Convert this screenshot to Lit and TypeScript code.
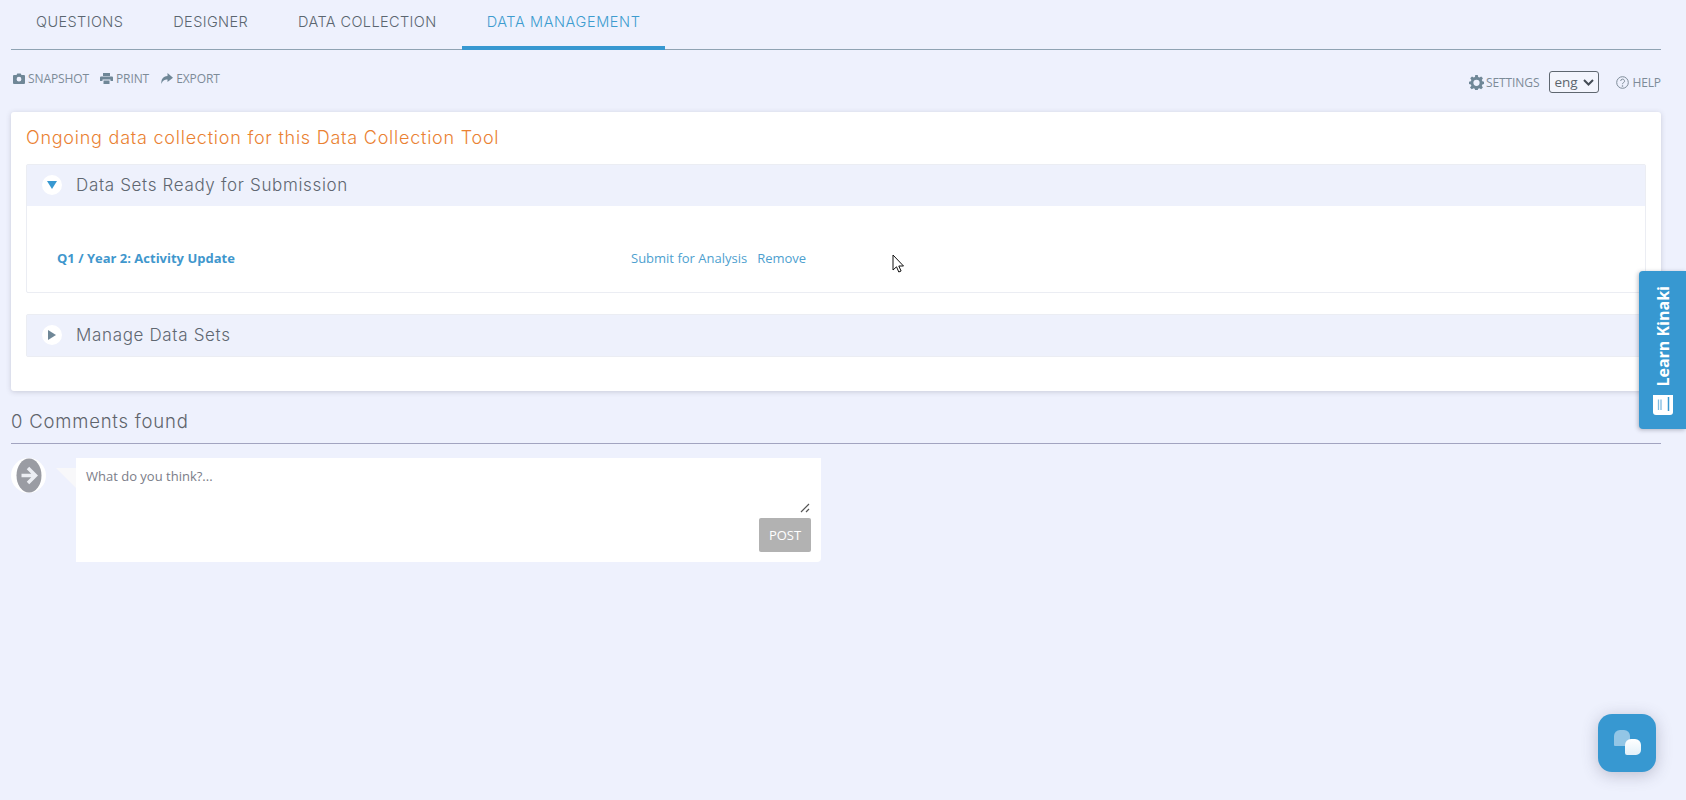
import { LitElement, html, css } from "lit";
import { customElement } from "lit/decorators.js";

@customElement("app-root")
export class AppRoot extends LitElement {
  static styles = css`
    :host { display: block; height: 800px; background: #eef1fd; position: relative; overflow: hidden; font-family: "Open Sans", sans-serif; color: #6f7f8e; }
    .page { padding: 0 25px 0 11px; display: flex; flex-direction: column; }
    .tabs { display: flex; height: 49px; border-bottom: 1px solid #8fa3b3; }
    .tab { box-sizing: border-box; padding: 0 25px 3px; height: 50px; display: flex; align-items: center; font: 300 14.5px Inter, sans-serif; color: #5b6670; letter-spacing: .4px; border-bottom: 4px solid transparent; }
    .tab.active { color: #3d9ccf; border-bottom-color: #3798d1; letter-spacing: .6px; }
    .toolbar { display: flex; align-items: flex-start; height: 24px; margin-top: 17px; font-size: 12px; letter-spacing: -0.1px; color: #7d8b98; }
    .group { display: flex; align-items: center; height: 22px; }
    .group.left { padding-left: 2px; }
    .group.right { margin-top: 4px; }
    .tool { display: flex; align-items: center; gap: 3px; margin-right: 11px; }
    .tool.end { margin-right: 0; }
    .tool.tight { gap: 2px; }
    .tool svg { display: block; fill: #6f8797; }
    .spacer { flex: 1; }
    .select { width: 50px; height: 22px; box-sizing: border-box; border: 1px solid #5f6770; border-radius: 3px; background: #f3f5fd; display: flex; align-items: center; justify-content: space-between; padding: 0 4px; font-size: 13.5px; letter-spacing: 0; color: #5c656d; margin: 0 17px 0 10px; }
    .card { margin-top: 21px; background: #fff; height: 279px; box-sizing: border-box; padding: 14px 15px 0; border-radius: 3px; box-shadow: 0 1px 5px rgba(90,90,110,.25); }
    .title { font: 300 18px/24px Inter, sans-serif; letter-spacing: .76px; color: #ea8132; }
    .section { margin-top: 14px; border: 1px solid #ebedf3; border-radius: 2px; }
    .section + .section { margin-top: 21px; }
    .head { box-sizing: border-box; height: 41px; background: #eef1fc; display: flex; align-items: center; padding: 0 0 2px 15px; font: 300 17px Inter, sans-serif; letter-spacing: .66px; color: #5f6771; gap: 14px; }
    .disc { width: 20px; height: 20px; border-radius: 50%; background: #fff; display: flex; align-items: center; justify-content: center; }
    .body { height: 86px; box-sizing: border-box; display: flex; align-items: center; padding: 17px 0 0 30px; font-size: 13px; color: #4e9fcf; }
    .name { width: 574px; font-weight: 700; color: #3f97cd; }
    .link { margin-right: 10px; }
    .comments { margin-top: 18px; height: 34px; font: 300 18.5px/24px Inter, sans-serif; letter-spacing: .8px; color: #5f646c; border-bottom: 1px solid #a2a4c0; }
    .row { display: flex; margin-top: 14px; }
    .avatar { width: 35px; height: 35px; flex: none; border-radius: 50%; background: #fff; display: flex; align-items: center; justify-content: center; }
    .bubble { position: relative; width: 745px; height: 104px; margin-left: 30px; background: #fff; border-radius: 0 0 4px 0; }
    .bubble::before { content: ""; position: absolute; left: -20px; top: 10px; border-top: 20px solid #f8f8fa; border-left: 20px solid transparent; }
    .textarea { padding: 9px 0 0 10px; font-size: 13px; color: #7b7d88; }
    .post { position: absolute; right: 10px; bottom: 10px; width: 52px; height: 34px; border-radius: 2px; background: #b2b2b2; color: #fff; font-size: 13px; display: flex; align-items: center; justify-content: center; }
    .grip { position: absolute; right: 11px; bottom: 49px; }
    .learn { position: absolute; right: 0; top: 271px; width: 47px; height: 158px; box-sizing: border-box; background: #3798d1; border-radius: 4px 0 0 4px; box-shadow: -1px 1px 4px rgba(60,60,80,.35); color: #fff; display: flex; flex-direction: column-reverse; align-items: center; gap: 8px; padding-bottom: 14px; }
    .learn span { writing-mode: vertical-rl; transform: rotate(180deg); font: 700 16px "Open Sans", sans-serif; }
    .chat { position: absolute; left: 1598px; top: 714px; width: 58px; height: 58px; border-radius: 14px; background: #3798d1; box-shadow: 0 3px 16px rgba(70,70,100,.3); }
    .cursor { position: absolute; left: 892px; top: 254px; }
  `;

  render() {
    return html`
      <div class="page">
        <nav class="tabs">
          <div class="tab">QUESTIONS</div>
          <div class="tab">DESIGNER</div>
          <div class="tab">DATA COLLECTION</div>
          <div class="tab active">DATA MANAGEMENT</div>
        </nav>
        <div class="toolbar">
          <div class="group left">
            <div class="tool">
              <svg width="12" height="11" viewBox="0 0 12 11"><path fill-rule="evenodd" d="M1 2h2.500L4.300 .5h3.400L8.500 2H11a1 1 0 0 1 1 1v7a1 1 0 0 1-1 1H1a1 1 0 0 1-1-1V3a1 1 0 0 1 1-1zM6 3.800a2.400 2.400 0 1 0 0 4.800 2.400 2.400 0 0 0 0-4.800z"/></svg>
              SNAPSHOT
            </div>
            <div class="tool">
              <svg width="13" height="11" viewBox="0 0 13 11"><path fill-rule="evenodd" d="M3 0h7v3H3zM1 3.500h11a1 1 0 0 1 1 1V8h-2.500V6.500h-8V8H0V4.500a1 1 0 0 1 1-1zM3.500 7.500h6V11h-6z"/></svg>
              PRINT
            </div>
            <div class="tool">
              <svg width="13" height="11" viewBox="0 0 13 11"><path d="M7.500 0 13 4.800 7.500 9V6.500C4.500 6.500 2.500 7.500 1.500 11 .8 6.500 3 3.200 7.500 3z"/></svg>
              EXPORT
            </div>
          </div>
          <div class="spacer"></div>
          <div class="group right">
            <div class="tool end tight">
              <svg width="15" height="15" viewBox="0 0 24 24"><path fill-rule="evenodd" d="M10 0h4l.7 3.200 2 .8L19.500 2.300l2.800 2.800L20.500 8l.8 2 3 .7v3.700l-3 .7-.8 2 1.700 2.800-2.800 2.800-2.800-1.700-2 .8-.7 3h-4l-.7-3-2-.8-2.800 1.700-2.800-2.800L3.800 17l-.8-2-3-.7v-3.700l3-.7.8-2L2 5.100l2.800-2.800L7.500 4l2-.8zM12 7.500a5 5 0 1 0 0 10 5 5 0 0 0 0-10z"/></svg>
              SETTINGS
            </div>
            <div class="select">eng
              <svg width="11" height="7" viewBox="0 0 11 7"><path d="M1 1l4.500 4.500L10 1" fill="none" stroke="#444c55" stroke-width="2"/></svg>
            </div>
            <div class="tool end">
              <svg width="13" height="13" viewBox="0 0 13 13"><circle cx="6.500" cy="6.500" r="5.800" fill="none" stroke="#7d8b98"/><path d="M4.700 5a1.900 1.900 0 1 1 2.800 1.700c-.7.400-1 .7-1 1.500" fill="none" stroke="#7d8b98"/><circle cx="6.500" cy="10" r=".8" fill="#7d8b98"/></svg>
              HELP
            </div>
          </div>
        </div>
        <section class="card">
          <div class="title">Ongoing data collection for this Data Collection Tool</div>
          <div class="section">
            <div class="head">
              <span class="disc"><svg width="10" height="8" viewBox="0 0 10 8"><path d="M0 0h10L5 8z" fill="#3798d1"/></svg></span>
              Data Sets Ready for Submission
            </div>
            <div class="body">
              <span class="name">Q1 / Year 2: Activity Update</span>
              <span class="link">Submit for Analysis</span>
              <span class="link">Remove</span>
            </div>
          </div>
          <div class="section">
            <div class="head">
              <span class="disc"><svg width="8" height="10" viewBox="0 0 8 10"><path d="M0 0v10l8-5z" fill="#6f8797"/></svg></span>
              Manage Data Sets
            </div>
          </div>
        </section>
        <div class="comments">0 Comments found</div>
        <div class="row">
          <div class="avatar">
            <svg width="26" height="35" viewBox="0 0 26 35"><ellipse cx="13" cy="17.500" rx="12.500" ry="17" fill="#9a9ca3"/><path d="M5.500 17.500h13M12 10l7.500 7.500L12 25" fill="none" stroke="#eceef3" stroke-width="3.500"/></svg>
          </div>
          <div class="bubble">
            <div class="textarea">What do you think?...</div>
            <svg class="grip" width="10" height="10" viewBox="0 0 10 10"><path d="M1 9 9 1M6 9l3-3" stroke="#555" stroke-width="1.200"/></svg>
            <div class="post">POST</div>
          </div>
        </div>
      </div>
      <aside class="learn">
        <svg width="20" height="20" viewBox="0 0 20 20"><path d="M0 0h20v17a3 3 0 0 1-3 3H3a3 3 0 0 1-3-3z" fill="#fff"/><path d="M5.500 4.500v10.500M8 4.500v10.500" stroke="#7fbbe0" stroke-width="1.300"/><path d="M15.500 2v14" stroke="#3798d1" stroke-width="1.500"/></svg>
        <span>Learn Kinaki</span>
      </aside>
      <div class="chat">
        <svg width="58" height="58" viewBox="0 0 58 58">
          <defs><linearGradient id="fb" x1="0" y1="0" x2="0" y2="1"><stop offset="0" stop-color="#ffffff"/><stop offset="1" stop-color="#e2f0f9"/></linearGradient></defs>
          <path d="M22 16h4a6 6 0 0 1 6 6v7a3 3 0 0 1-3 3H17a1 1 0 0 1-1-1v-9a6 6 0 0 1 6-6z" fill="#93c6e6"/>
          <path d="M33 25h4a6 6 0 0 1 6 6v5a5 5 0 0 1-5 5H29a2 2 0 0 1-2-2v-8a6 6 0 0 1 6-6z" fill="url(#fb)"/>
        </svg>
      </div>
      <svg class="cursor" width="14" height="20" viewBox="0 0 14 20"><path d="M1 1v15l3.500-3.200 2.300 5.200 2.300-1-2.300-5h4.700z" fill="#fff" stroke="#111" stroke-width="1"/></svg>
    `;
  }
}
